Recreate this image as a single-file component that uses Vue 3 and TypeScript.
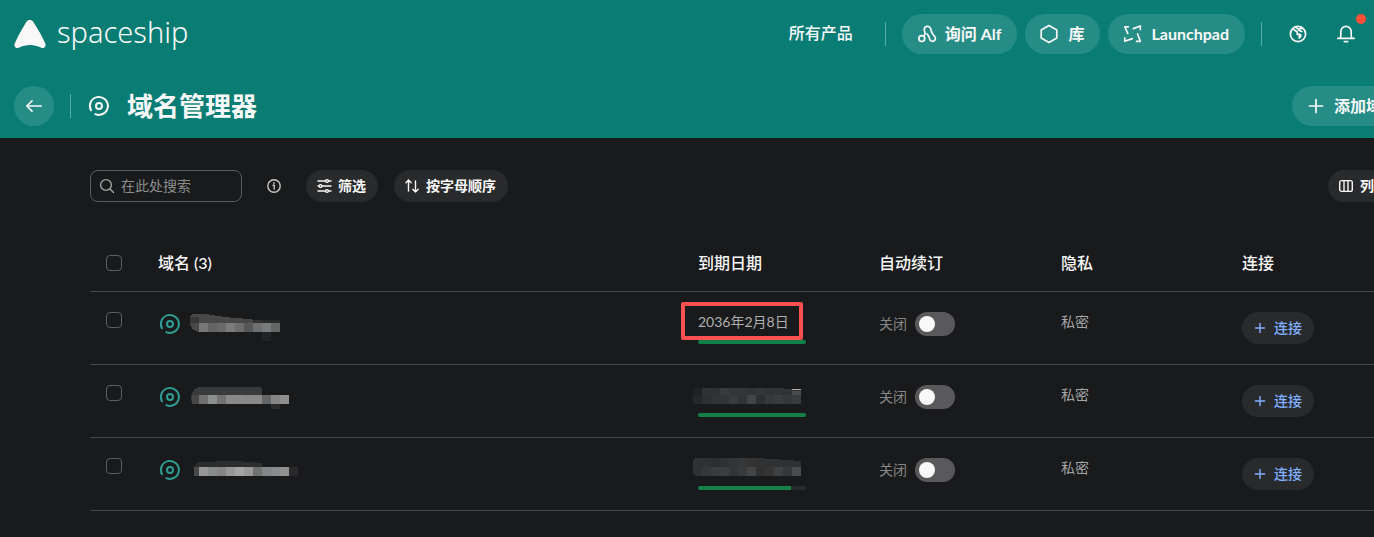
<script setup lang="ts">
import { reactive, ref } from 'vue'

interface Cell {
  x: number
  y: number
  w: number
  h: number
  fill: string
}

interface Mosaic {
  cells: Cell[]
  shape: string
  tint: string
}

interface DomainRow {
  id: string
  name: Mosaic
  date?: string
  dateMosaic?: Mosaic
  life: number
  highlighted: boolean
  selected: boolean
  renew: boolean
  privacy: string
}

const SIZE = 9

function strip(x: number, y: number, h: number, tones: string[], w = SIZE): Cell[] {
  return tones.map((tone, i) => ({ x: x + i * w, y, w, h, fill: '#' + tone }))
}

const query = ref('')
const allSelected = ref(false)

const rows = reactive<DomainRow[]>([
  {
    id: 'one',
    name: {
      tint: '#484848',
      shape: 'M0 6Q0 2 4 2H16Q36 6 62 7V8L90 9V11H9V20Q1 19 0 11Z',
      cells: [
        ...strip(0, 5, 6, ['363636']),
        ...strip(63, 8, 3, ['313131', '292a2a', '292a2a']),
        ...strip(9, 11, 9, ['777777', '636363', '6a6a6a', '7a7b7d', '6c6d6c', '565759', '6e6f70', '7a7b7d', '656766']),
        ...strip(72, 20, 9, ['222324']),
      ],
    },
    date: '2036年2月8日',
    life: 100,
    highlighted: true,
    selected: false,
    renew: false,
    privacy: '私密',
  },
  {
    id: 'two',
    name: {
      tint: '#393a3b',
      shape: 'M1 11Q3 3 9 2H70L72 3V10H9V19H3Q1 17 1 11Z',
      cells: [
        ...strip(2, 10, 9, ['464647'], 7),
        ...strip(9, 10, 9, ['707070', '8c8e8c', '717171', '898a88', '898a88', '868786', '888987', '646566', '858685', '8d8e8d']),
        ...strip(81, 19, 5, ['2a2b2c']),
      ],
    },
    dateMosaic: {
      tint: '#303132',
      shape: 'M4 3H80L103 5V19H-5V3Z',
      cells: [
        ...strip(-5, 3, 7, ['202122', '313233', '303132', '3a3b3c', '343536', '353637', '323334', '353637', '323334', '323334']),
        ...strip(-5, 10, 9, ['252627', '2e2f30', '333435', '333435', '3a3b3c', '323334', '434445', '2e2f30', '373839', '3b3c3d', '353637', '3a3b3c']),
        ...strip(94, 6, 4, ['4a4b4c']),
        ...strip(94, 4, 1, ['b2b2b2']),
      ],
    },
    life: 100,
    highlighted: false,
    selected: false,
    renew: false,
    privacy: '私密',
  },
  {
    id: 'three',
    name: {
      tint: '#2c2d2e',
      shape: 'M4 9Q6 5 9 4L45 3L72 5V9Z',
      cells: [
        ...strip(4, 9, 9, ['464748'], 5),
        ...strip(9, 9, 9, ['969796', '8b8d8c', '848584', '979897', 'a2a4a3', '979897', '707271', '858688', '888a8b', '909190', '29292b']),
      ],
    },
    dateMosaic: {
      tint: '#303132',
      shape: 'M-5 3Q-4 0 0 0H60L103 3V18H-2Q-5 16 -5 15Z',
      cells: [
        ...strip(4, 0, 9, ['303132', '2c2d2e', '303132', '333435', '363738', '333333']),
        ...strip(4, 9, 9, ['363738', '3b3c3d', '3d3e3f', '333435', '393a3b', '434445', '2f3031', '373534', '3f4041', '353637', '4b4c4d']),
      ],
    },
    life: 86,
    highlighted: false,
    selected: false,
    renew: false,
    privacy: '私密',
  },
])

function toggleAll(): void {
  rows.forEach((row) => (row.selected = allSelected.value))
}
</script>

<template>
  <div class="page">
    <header class="header">
      <div class="topbar">
        <a class="brand" href="#">
          <svg class="brand-mark" viewBox="0 0 32 28" aria-hidden="true">
            <path d="M12.4 1.8C14-.6 17.600-.6 19.200 1.800C24 9 28 16 31.300 23.500C32.500 26.500 30 28.700 27.300 27.800C19.500 24.200 12.500 24.200 4.700 27.800C2 28.700-.5 26.500.7 23.500C4 16 8 9 12.400 1.800Z" fill="currentColor" />
          </svg>
          <span class="brand-name">spaceship</span>
        </a>
        <nav class="nav">
          <a class="products" href="#">所有产品</a>
          <span class="divider"></span>
          <div class="pills">
            <button class="pill" type="button">
              <svg class="icon18" viewBox="0 0 18 18" aria-hidden="true">
                <circle cx="3.800" cy="13.600" r="2.900" />
                <path d="M6.200 10.300C8.300 8.600 6.400 6.800 6.200 4.800A3.300 3.300 0 0 1 12.600 3.500C13.300 6 13.300 7.800 15.500 10C17.500 12 17.800 13.600 16.900 15A2.900 2.900 0 0 1 11.700 14.200C11 12 11 10.800 9 8.900" />
              </svg>
              询问 Alf
            </button>
            <button class="pill" type="button">
              <svg class="icon18" viewBox="0 0 18 18" aria-hidden="true">
                <path d="M8 .6 15.800 4.900V13.100L8 17.400.2 13.100V4.900Z" />
              </svg>
              库
            </button>
            <button class="pill" type="button">
              <svg class="icon18" viewBox="0 0 18 18" aria-hidden="true">
                <path d="M4.300 1.800H.8L3.800 8.500M9.300 3.600 16.300 1V4.500M13.500 8.800 16.300 16.300H12.500M8.300 13.600.8 16.300V12.800" />
              </svg>
              Launchpad
            </button>
          </div>
          <span class="divider"></span>
          <div class="round-actions">
            <button class="plain" type="button" aria-label="语言">
              <svg class="icon18" viewBox="0 0 18 18" aria-hidden="true">
                <circle cx="9" cy="9" r="7.600" />
                <path d="M3.500 4.200C6 4 6 6.800 8.200 6.500V9.300C10 9 12.200 9.300 11.800 11C11.500 12.300 10.500 12 10.300 13.200V9.500M6.500 2.200C7.500 3.200 8.500 4 9.500 4.200L13.200 3.300M9.500 4.200C9.500 5.500 11 6 12.800 6.500" />
              </svg>
            </button>
            <button class="plain" type="button" aria-label="通知">
              <svg class="icon18" viewBox="0 0 18 18" aria-hidden="true">
                <path d="M.8 13.300H17.200M3.300 13C4.200 11 3.800 9 3.800 6.500A5.200 5.200 0 0 1 14.200 6.500C14.200 9 13.800 11 14.700 13M7.300 16.600H10.700" />
              </svg>
              <span class="badge"></span>
            </button>
          </div>
        </nav>
      </div>
      <div class="titlebar">
        <button class="back" type="button" aria-label="返回">
          <svg class="icon16" viewBox="0 0 16 16" aria-hidden="true">
            <path d="M15.200 8H1M6 2.800.8 8 6 13.200" />
          </svg>
        </button>
        <span class="divider"></span>
        <svg class="domain-icon" viewBox="0 0 20 20" aria-hidden="true">
          <path d="M2 14.300A9 9 0 1 1 6.300 18.200" />
          <circle cx="10" cy="10" r="3" />
        </svg>
        <h1>域名管理器</h1>
        <button class="pill add" type="button">
          <svg class="icon16" viewBox="0 0 16 16" aria-hidden="true">
            <path d="M8 1.500V14.500M1.500 8H14.500" />
          </svg>
          添加域名
        </button>
      </div>
    </header>

    <main class="content">
      <div class="toolbar">
        <label class="search">
          <svg class="icon14" viewBox="0 0 14 14" aria-hidden="true">
            <circle cx="6" cy="6" r="5.400" />
            <path d="M10 10 13.500 13.500" />
          </svg>
          <input v-model="query" type="text" placeholder="在此处搜索" aria-label="在此处搜索" />
        </label>
        <button class="info" type="button" aria-label="提示">
          <svg class="icon14" viewBox="0 0 14 14" aria-hidden="true">
            <circle cx="7" cy="7" r="6.200" />
            <path d="M6 6.300H7.200V10M7 3.700V4.600" />
          </svg>
        </button>
        <div class="filters">
          <button class="chip" type="button">
            <svg class="icon14" viewBox="0 0 14 14" aria-hidden="true">
              <path d="M0 2H7.500M10.500 2H13M0 7H1M4 7H13M0 12H7.500M10.500 12H13" />
              <circle cx="9" cy="2" r="1.400" />
              <circle cx="2.500" cy="7" r="1.400" />
              <circle cx="9" cy="12" r="1.400" />
            </svg>
            筛选
          </button>
          <button class="chip" type="button">
            <svg class="icon14" viewBox="0 0 14 14" aria-hidden="true">
              <path d="M2.500 12V1M0 3.700 2.500 1 5.200 3.700M9.500 2V13M6.800 10.300 9.500 13 12.200 10.300" />
            </svg>
            按字母顺序
          </button>
        </div>
        <button class="chip columns" type="button">
          <svg class="icon14" viewBox="0 0 14 14" aria-hidden="true">
            <rect x="-.3" y="1.600" width="12.600" height="10.800" rx="2" />
            <path d="M4 1.600V12.400M8 1.600V12.400" />
          </svg>
          列
        </button>
      </div>

      <table class="domains">
        <colgroup>
          <col class="c-check" />
          <col class="c-name" />
          <col class="c-mid" />
          <col class="c-renew" />
          <col class="c-mid" />
          <col class="c-last" />
        </colgroup>
        <thead>
          <tr>
            <th class="check">
              <input v-model="allSelected" type="checkbox" aria-label="全选" @change="toggleAll" />
            </th>
            <th scope="col">域名 (3)</th>
            <th scope="col">到期日期</th>
            <th scope="col">自动续订</th>
            <th scope="col">隐私</th>
            <th scope="col">连接</th>
          </tr>
        </thead>
        <tbody>
          <tr v-for="row in rows" :key="row.id">
            <td class="check">
              <input v-model="row.selected" type="checkbox" aria-label="选择域名" />
            </td>
            <td>
              <div class="name">
                <svg class="domain-icon" viewBox="0 0 20 20" aria-hidden="true">
                  <path d="M2 14.300A9 9 0 1 1 6.300 18.200" />
                  <circle cx="10" cy="10" r="3" />
                </svg>
                <svg class="mosaic" viewBox="0 0 108 24" aria-hidden="true">
                  <path :d="row.name.shape" :fill="row.name.tint" />
                  <rect v-for="(c, i) in row.name.cells" :key="i" :x="c.x" :y="c.y" :width="c.w" :height="c.h" :fill="c.fill" />
                </svg>
              </div>
            </td>
            <td>
              <div class="expiry">
                <span v-if="row.date" class="date">{{ row.date }}</span>
                <svg v-else-if="row.dateMosaic" class="mosaic date-mosaic" viewBox="0 0 108 20" aria-hidden="true">
                  <path :d="row.dateMosaic.shape" :fill="row.dateMosaic.tint" />
                  <rect v-for="(c, i) in row.dateMosaic.cells" :key="i" :x="c.x" :y="c.y" :width="c.w" :height="c.h" :fill="c.fill" />
                </svg>
                <div class="track"><div class="fill" :style="{ width: row.life + '%' }"></div></div>
                <span v-if="row.highlighted" class="marker"></span>
              </div>
            </td>
            <td>
              <label class="switch">
                <span>{{ row.renew ? '开启' : '关闭' }}</span>
                <input v-model="row.renew" type="checkbox" role="switch" />
              </label>
            </td>
            <td><span class="privacy">{{ row.privacy }}</span></td>
            <td>
              <button class="chip connect" type="button">
                <svg class="icon12" viewBox="0 0 12 12" aria-hidden="true">
                  <path d="M6 1.400V10.600M1.400 6H10.600" />
                </svg>
                连接
              </button>
            </td>
          </tr>
        </tbody>
      </table>
    </main>
  </div>
</template>

<style>
body {
  margin: 0;
  background: #191a1b;
}
</style>

<style scoped>
.page {
  min-height: 100vh;
  overflow: hidden;
  background: #191a1b;
  color: #f8f8f8;
  font-family: Lato, "Noto Sans CJK SC", sans-serif;
  font-size: 14px;
  line-height: 20px;
}

* {
  box-sizing: border-box;
}

button,
input {
  margin: 0;
  font: inherit;
  color: inherit;
}

button {
  padding: 0;
  border: 0;
  background: none;
  white-space: nowrap;
  cursor: pointer;
}

a {
  color: inherit;
  text-decoration: none;
}

svg {
  display: block;
  flex: none;
  fill: none;
  stroke: currentColor;
  stroke-width: 1.5;
  stroke-linecap: round;
  stroke-linejoin: round;
  overflow: visible;
}

.icon18 { width: 18px; height: 18px; stroke-width: 1.7; }
.icon16 { width: 16px; height: 16px; stroke-width: 1.7; }
.icon14 { width: 14px; height: 14px; stroke-width: 1.4; }
.icon12 { width: 12px; height: 12px; stroke-width: 1.4; }

.header {
  padding: 14px 8px 12px 14px;
  background: #097d74;
}

.topbar,
.titlebar,
.nav,
.pills,
.round-actions,
.brand,
.toolbar,
.filters {
  display: flex;
  align-items: center;
}

.topbar { justify-content: space-between; height: 40px; }

.brand { gap: 11px; }

.brand-mark { width: 32px; height: 28px; stroke: none; }

.brand-name {
  padding-bottom: 4px;
  font-family: "Noto Sans", sans-serif;
  font-weight: 300;
  font-size: 29px;
  line-height: 36px;
}

.nav { gap: 16px; }

.products {
  margin-right: 16px;
  padding-bottom: 2px;
  font-size: 16px;
  font-weight: 500;
}

.divider {
  width: 1px;
  height: 24px;
  background: #5caaa4;
}

.pills { gap: 8px; }

.pill {
  display: flex;
  align-items: center;
  gap: 9px;
  height: 40px;
  padding: 0 16px;
  border-radius: 20px;
  background: #268d86;
  font-size: 16px;
  font-weight: 700;
}

.round-actions { gap: 8px; }

.plain {
  position: relative;
  display: flex;
  align-items: center;
  justify-content: center;
  width: 40px;
  height: 40px;
}

.badge {
  position: absolute;
  top: 0;
  right: 0;
  width: 10px;
  height: 10px;
  border-radius: 50%;
  background: #ff4f38;
}

.titlebar { margin-top: 32px; }

.titlebar .divider { margin: 0 18px 0 16px; }

.back {
  display: flex;
  align-items: center;
  justify-content: center;
  width: 40px;
  height: 40px;
  border-radius: 50%;
  background: #268d86;
}

.domain-icon { width: 20px; height: 20px; stroke-width: 2; }

h1 {
  margin: 0 0 0 18px;
  font-size: 26px;
  line-height: 40px;
  font-weight: 700;
}

.add {
  gap: 10px;
  margin: 0 -48px 0 auto;
}

.content { padding: 32px 0 26px 90px; }

.search {
  display: flex;
  align-items: center;
  gap: 7px;
  width: 152px;
  height: 32px;
  padding: 0 9px;
  border: 1px solid #5c5d5f;
  border-radius: 8px;
  color: #a4a5a6;
}

.search input {
  flex: 1;
  min-width: 0;
  padding: 0;
  border: 0;
  outline: 0;
  background: none;
  color: #f8f8f8;
}

.search input::placeholder { color: #8c8d8e; opacity: 1; }

.info {
  margin: 0 25px;
  color: #c8c8c8;
}

.filters { gap: 16px; }

.chip {
  display: flex;
  align-items: center;
  gap: 6px;
  height: 32px;
  padding: 0 12px;
  border-radius: 16px;
  background: #292a2c;
  font-weight: 700;
}

.columns { margin: 0 -12px 0 auto; }

.domains {
  width: 100%;
  margin-top: 33px;
  border-collapse: separate;
  border-spacing: 0;
  table-layout: fixed;
}

.c-check { width: 68px; }
.c-mid { width: 181px; }
.c-renew { width: 182px; }
.c-last { width: 132px; }

th,
td {
  padding: 0;
  border-bottom: 1px solid #444547;
  text-align: left;
}

th {
  height: 57px;
  font-size: 16px;
  font-weight: 500;
}

td {
  height: 73px;
  padding-top: 20px;
  vertical-align: top;
}

.check { padding-left: 16px; }

.check input {
  display: block;
  appearance: none;
  width: 16px;
  height: 16px;
  border: 1px solid #5c5d5f;
  border-radius: 4px;
}

.check input:checked { background: #2f9d94; }

.name {
  display: flex;
  align-items: center;
  gap: 10px;
  height: 24px;
  padding-left: 2px;
  color: #2f9d94;
}

.mosaic {
  width: 108px;
  height: 24px;
  stroke: none;
  shape-rendering: crispEdges;
}

.date-mosaic { height: 20px; }

.expiry {
  position: relative;
  width: 108px;
}

.date {
  display: block;
  color: #b0b0b1;
  white-space: nowrap;
}

.track {
  height: 4px;
  margin-top: 8px;
  border-radius: 2px;
  background: #292a2c;
  overflow: hidden;
}

.fill {
  height: 100%;
  background: #128047;
}

.marker {
  position: absolute;
  top: -10px;
  left: -17px;
  width: 122px;
  height: 38px;
  border: 4px solid #fb5151;
  border-radius: 2px;
}

.switch {
  display: inline-flex;
  align-items: center;
  gap: 8px;
  height: 24px;
  color: #868788;
}

.switch input {
  appearance: none;
  display: flex;
  align-items: center;
  width: 40px;
  height: 24px;
  padding: 0 4px;
  border-radius: 12px;
  background: #59595b;
}

.switch input::before {
  content: "";
  width: 16px;
  height: 16px;
  border-radius: 50%;
  background: #f8f8f8;
}

.switch input:checked { justify-content: flex-end; background: #128047; }

.privacy { display: block; color: #a4a5a6; }

.connect {
  gap: 8px;
  color: #80b0ff;
  font-weight: 500;
}
</style>
